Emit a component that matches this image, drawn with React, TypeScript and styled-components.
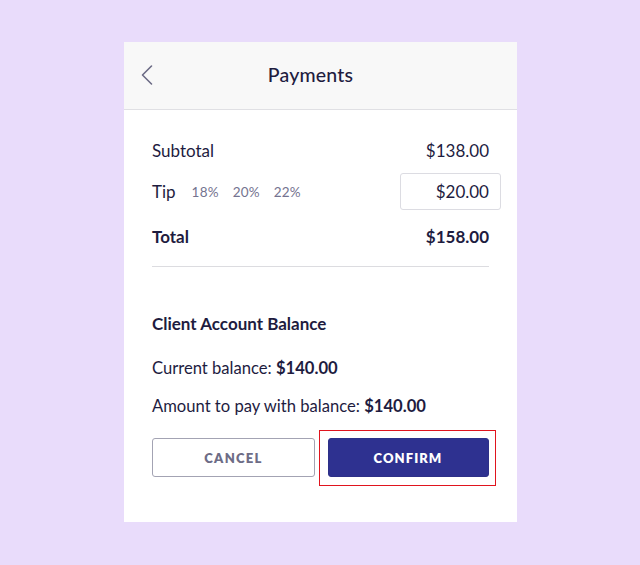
import React from "react";
import styled, { createGlobalStyle } from "styled-components";

const Global = createGlobalStyle`
  html, body { margin: 0; padding: 0; background: #e9dcfb; }
  body { font-family: "Lato", "Noto Sans", sans-serif; color: #1e1c3f; }
  * { box-sizing: border-box; }
`;

const Page = styled.div`
  width: 640px;
  height: 565px;
  padding: 42px 0 0 124px;
  background: #e9dcfb;
`;

const Card = styled.div`
  width: 393px;
  background: #ffffff;
  display: flex;
  flex-direction: column;
`;

const Header = styled.header`
  height: 68px;
  background: #f8f8f8;
  border-bottom: 1px solid #e0e0e4;
  display: flex;
  align-items: center;
  justify-content: center;
  padding: 0 20px 2px 0;
  position: relative;
`;

const BackButton = styled.button`
  position: absolute;
  left: 13px;
  top: 20px;
  width: 20px;
  height: 26px;
  padding: 0;
  border: none;
  background: transparent;
  display: flex;
  align-items: center;
  justify-content: center;
`;

const Title = styled.h1`
  margin: 0;
  font-size: 19.5px;
  font-weight: 500;
  color: #1e1c3f;
  letter-spacing: 0.2px;
`;

const Body = styled.div`
  padding: 28px 28px 45px 28px;
  display: flex;
  flex-direction: column;
`;

const Row = styled.div<{ $mt?: number; $h?: number }>`
  display: flex;
  align-items: center;
  justify-content: space-between;
  height: ${(p) => p.$h ?? 24}px;
  margin-top: ${(p) => p.$mt ?? 0}px;
`;

const Label = styled.span<{ $bold?: boolean }>`
  font-size: 17px;
  font-weight: ${(p) => (p.$bold ? 700 : 400)};
  color: #1e1c3f;
`;

const Amount = styled.span<{ $bold?: boolean }>`
  font-size: 17px;
  font-weight: ${(p) => (p.$bold ? 700 : 400)};
  color: #1e1c3f;
`;

const TipGroup = styled.div`
  display: flex;
  align-items: center;
  gap: 16px;
`;

const Percents = styled.div`
  display: flex;
  gap: 14px;
`;

const Percent = styled.span`
  font-size: 13.5px;
  color: #74738f;
  letter-spacing: 0.2px;
`;

const TipInput = styled.div`
  width: 101px;
  height: 37px;
  margin-right: -12px;
  border: 1px solid #dcdce2;
  border-radius: 3px;
  display: flex;
  align-items: center;
  justify-content: flex-end;
  padding-right: 11px;
  font-size: 17px;
  color: #1e1c3f;
`;

const Divider = styled.hr`
  margin: 18px 0 0 0;
  border: none;
  border-top: 1px solid #dcdce0;
  height: 0;
`;

const SectionTitle = styled.h2`
  margin: 45px 0 0 0;
  height: 24px;
  line-height: 24px;
  font-size: 17px;
  font-weight: 700;
  color: #1e1c3f;
`;

const Line = styled.p<{ $mt: number }>`
  margin: ${(p) => p.$mt}px 0 0 0;
  height: 24px;
  line-height: 24px;
  font-size: 16.6px;
  color: #1e1c3f;
  b { font-weight: 700; }
`;

const Buttons = styled.div`
  margin-top: 20px;
  display: grid;
  grid-template-columns: 163px 162px;
  justify-content: space-between;
  align-items: center;
`;

const FocusRing = styled.div`
  margin: -9px -7px -9px -8px;
  padding: 7.5px 6.5px 7.5px 7.5px;
  border: 1.5px solid #e0141e;
  display: flex;
`;

const Button = styled.button<{ $primary?: boolean }>`
  width: 100%;
  height: 39px;
  border-radius: 3px;
  font-family: inherit;
  font-size: 13px;
  font-weight: 800;
  letter-spacing: ${(p) => (p.$primary ? "1.05px" : "1.3px")};
  cursor: pointer;
  border: 1px solid ${(p) => (p.$primary ? "#2d3088" : "#a3a3b3")};
  background: ${(p) => (p.$primary ? "#2e3190" : "#ffffff")};
  color: ${(p) => (p.$primary ? "#ffffff" : "#6d6c86")};
  outline: none;
`;

const Chevron = () => (
  <svg width="14" height="22" viewBox="0 0 14 22" fill="none">
    <path d="M11.5 2 L2.5 11 L11.5 20" stroke="#6c6b85" strokeWidth="1.6" strokeLinecap="round" strokeLinejoin="round" />
  </svg>
);

export default function App() {
  return (
    <Page>
      <Global />
      <Card>
        <Header>
          <BackButton aria-label="Back">
            <Chevron />
          </BackButton>
          <Title>Payments</Title>
        </Header>
        <Body>
          <Row>
            <Label>Subtotal</Label>
            <Amount>$138.00</Amount>
          </Row>
          <Row $mt={11} $h={37}>
            <TipGroup>
              <Label>Tip</Label>
              <Percents>
                <Percent>18%</Percent>
                <Percent>20%</Percent>
                <Percent>22%</Percent>
              </Percents>
            </TipGroup>
            <TipInput>$20.00</TipInput>
          </Row>
          <Row $mt={14}>
            <Label $bold>Total</Label>
            <Amount $bold>$158.00</Amount>
          </Row>
          <Divider />
          <SectionTitle>Client Account Balance</SectionTitle>
          <Line $mt={20}>
            Current balance: <b>$140.00</b>
          </Line>
          <Line $mt={14}>
            Amount to pay with balance: <b>$140.00</b>
          </Line>
          <Buttons>
            <Button>CANCEL</Button>
            <FocusRing>
              <Button $primary>CONFIRM</Button>
            </FocusRing>
          </Buttons>
        </Body>
      </Card>
    </Page>
  );
}
